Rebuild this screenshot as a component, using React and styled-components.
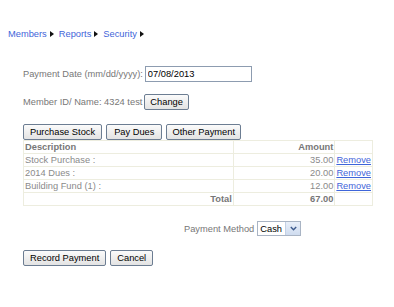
import React, { useState } from 'react';
import styled, { createGlobalStyle } from 'styled-components';

const Global = createGlobalStyle`
  body {
    margin: 8px;
    font-family: "Liberation Sans", Arial, sans-serif;
    font-size: 9.3px;
    color: #777;
    background: #fff;
  }
`;

const Crumbs = styled.div`
  display: flex;
  align-items: center;
  gap: 3px;
  margin-top: 19px;
  height: 13px;
`;

const Crumb = styled.a`
  color: #3f65d9;
  text-decoration: none;
`;

const Arrow = styled.span`
  display: inline-block;
  width: 0;
  height: 0;
  border-top: 3.5px solid transparent;
  border-bottom: 3.5px solid transparent;
  border-left: 4px solid #111;
  margin-right: 2px;
`;

const Form = styled.div`
  padding-left: 15px;
  margin-top: 26px;
`;

const Line = styled.div`
  display: flex;
  align-items: center;
  gap: ${(p) => p.gap || 3}px;
  margin-top: ${(p) => p.mt || 0}px;
  margin-left: ${(p) => p.ml || 0}px;
`;

const TextInput = styled.input`
  box-sizing: border-box;
  width: 107px;
  height: 16px;
  padding: 0 2px;
  border: 1px solid #8d9cb0;
  font-family: inherit;
  font-size: 9.3px;
  color: #000;
  outline: none;
`;

const Button = styled.button`
  box-sizing: border-box;
  height: 16px;
  padding: 0 ${(p) => p.pad || 6}px;
  border: 1px solid #6c7d92;
  border-radius: 2px;
  background: linear-gradient(#fbfbfb, #e3e3e3);
  font-family: inherit;
  font-size: 9.3px;
  color: #000;
  line-height: 14px;
`;

const Table = styled.table`
  border-collapse: collapse;
  width: 350px;
  border: 1px solid #cfcfc4;
  color: #888;
`;

const Cell = styled.td`
  border: 1px solid #ededdf;
  height: 12px;
  padding: 0 1px;
  line-height: 12px;
  text-align: ${(p) => p.align || 'left'};
  font-weight: ${(p) => (p.bold ? 'bold' : 'normal')};
  color: ${(p) => (p.bold ? '#777' : '#8a8a8a')};
  width: ${(p) => (p.w ? p.w + 'px' : 'auto')};
  white-space: nowrap;
`;

const RemoveLink = styled.a`
  color: #3f65d9;
  text-decoration: underline;
`;

const SelectBox = styled.div`
  position: relative;
  box-sizing: border-box;
  width: 44px;
  height: 15px;
  border: 1px solid #a9b4c4;
  background: #fff;
`;

const NativeSelect = styled.select`
  appearance: none;
  -webkit-appearance: none;
  width: 100%;
  height: 100%;
  border: none;
  padding: 0 0 0 2px;
  background: transparent;
  font-family: inherit;
  font-size: 9.3px;
  color: #000;
  outline: none;
`;

const DropButton = styled.span`
  position: absolute;
  top: 0;
  right: 0;
  bottom: 0;
  width: 14px;
  display: flex;
  align-items: center;
  justify-content: center;
  background: linear-gradient(#e9eff9, #cfdcef);
  border-left: 1px solid #c3d0e4;
  pointer-events: none;
`;

const items = [
  { desc: 'Stock Purchase :', amount: '35.00' },
  { desc: '2014 Dues :', amount: '20.00' },
  { desc: 'Building Fund (1) :', amount: '12.00' },
];

export default function App() {
  const [date, setDate] = useState('07/08/2013');
  return (
    <>
      <Global />
      <Crumbs>
        <Crumb href="#">Members</Crumb>
        <Arrow />
        <Crumb href="#">Reports</Crumb>
        <Arrow />
        <Crumb href="#">Security</Crumb>
        <Arrow />
      </Crumbs>
      <Form>
        <Line gap={2}>
          <span>Payment Date (mm/dd/yyyy):</span>
          <TextInput value={date} onChange={(e) => setDate(e.target.value)} />
        </Line>
        <Line mt={12} gap={2}>
          <span>Member ID/ Name: 4324 test</span>
          <Button pad={5}>Change</Button>
        </Line>
        <Line mt={14} gap={4}>
          <Button pad={6}>Purchase Stock</Button>
          <Button pad={7}>Pay Dues</Button>
          <Button pad={5}>Other Payment</Button>
        </Line>
        <Table>
          <tbody>
            <tr>
              <Cell bold w={208}>Description</Cell>
              <Cell bold align="right" w={99}>Amount</Cell>
              <Cell />
            </tr>
            {items.map((it) => (
              <tr key={it.desc}>
                <Cell>{it.desc}</Cell>
                <Cell align="right">{it.amount}</Cell>
                <Cell>
                  <RemoveLink href="#">Remove</RemoveLink>
                </Cell>
              </tr>
            ))}
            <tr>
              <Cell bold align="right">Total</Cell>
              <Cell bold align="right">67.00</Cell>
              <Cell />
            </tr>
          </tbody>
        </Table>
        <Line ml={161} mt={15} gap={3}>
          <span>Payment Method</span>
          <SelectBox>
            <NativeSelect defaultValue="Cash">
              <option>Cash</option>
              <option>Check</option>
            </NativeSelect>
            <DropButton>
              <svg width="7" height="5" viewBox="0 0 7 5">
                <path d="M0.8 1 L3.5 3.8 L6.2 1" fill="none" stroke="#3d5a8c" strokeWidth="1.4" />
              </svg>
            </DropButton>
          </SelectBox>
        </Line>
        <Line mt={14} gap={4}>
          <Button pad={6}>Record Payment</Button>
          <Button pad={6}>Cancel</Button>
        </Line>
      </Form>
    </>
  );
}
